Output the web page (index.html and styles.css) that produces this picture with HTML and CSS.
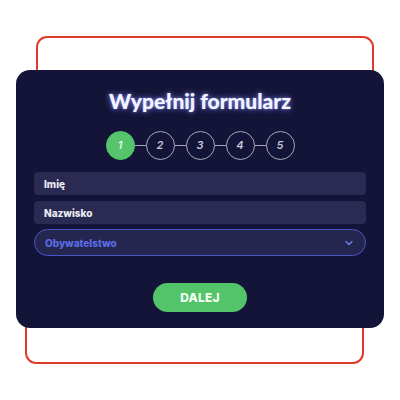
FILE: index.html
```html
<!DOCTYPE html>
<html lang="pl">
<head>
<meta charset="utf-8">
<link rel="stylesheet" href="styles.css">
</head>
<body>
<div class="stage">
  <div class="frame frame-top"></div>
  <div class="frame frame-bottom"></div>
  <div class="card">
    <h1 class="title">Wypełnij formularz</h1>
    <div class="steps">
      <span class="step active">1</span><span class="link"></span>
      <span class="step">2</span><span class="link"></span>
      <span class="step">3</span><span class="link"></span>
      <span class="step">4</span><span class="link"></span>
      <span class="step">5</span>
    </div>
    <div class="fields">
      <div class="field">Imię</div>
      <div class="field">Nazwisko</div>
      <div class="field select">
        <span>Obywatelstwo</span>
        <svg class="chev" width="8" height="6" viewBox="0 0 8 6"><polyline points="1,1.5 4,4.5 7,1.5" fill="none" stroke="#6a78e6" stroke-width="1.6" stroke-linecap="round" stroke-linejoin="round"/></svg>
      </div>
    </div>
    <div class="actions"><button class="btn">DALEJ</button></div>
  </div>
</div>
</body>
</html>
```

FILE: styles.css
```css
html, body { margin: 0; padding: 0; background: #ffffff; }
.stage {
  position: relative;
  width: 400px;
  height: 400px;
  overflow: hidden;
  padding-top: 70px;
  box-sizing: border-box;
  font-family: "Inter", "Lato", sans-serif;
}
.frame {
  position: absolute;
  border: 2.5px solid #e03a2c;
  border-radius: 11px;
  box-sizing: border-box;
}
.frame-top { left: 36px; top: 36px; width: 338px; height: 120px; }
.frame-bottom { left: 25px; top: 250px; width: 339px; height: 114px; }
.card {
  position: relative;
  margin-left: 16px;
  width: 368px;
  height: 258px;
  box-sizing: border-box;
  background: #141438;
  border-radius: 14px;
  padding: 19px 18px 16px 18px;
  display: flex;
  flex-direction: column;
}
.title {
  margin: 0;
  text-align: center;
  font-family: "Lato", sans-serif;
  font-size: 21px;
  line-height: 24px;
  font-weight: 900;
  color: #f4f4ff;
  text-shadow: 0 0 6px rgba(130, 140, 255, 0.9), 0 0 2px rgba(160, 170, 255, 0.8);
}
.steps {
  margin-top: 17px;
  height: 30px;
  display: flex;
  justify-content: center;
  align-items: center;
}
.step {
  width: 29px;
  height: 29px;
  box-sizing: border-box;
  border: 1px solid #a6a6bc;
  border-radius: 50%;
  display: flex;
  align-items: center;
  justify-content: center;
  font-size: 11px;
  font-style: italic;
  font-weight: 600;
  color: #c4c4d4;
}
.step.active {
  background: #55c46b;
  border-color: #55c46b;
  color: #e6f6e8;
}
.link {
  width: 11px;
  height: 1px;
  background: #a6a6bc;
}
.fields {
  margin-top: 12px;
  display: flex;
  flex-direction: column;
  gap: 6px;
}
.field {
  height: 23px;
  box-sizing: border-box;
  background: #2a2a52;
  border-radius: 4px;
  padding-left: 10px;
  display: flex;
  align-items: center;
  font-size: 10px;
  font-weight: 800;
  color: #ececf4;
}
.field.select {
  height: 27px;
  margin-top: -1px;
  border: 1.5px solid #4a56c8;
  border-radius: 14px;
  background: #24264f;
  color: #5b6ce6;
  justify-content: space-between;
  padding-right: 12px;
}
.chev { display: block; }
.actions {
  margin-top: 27px;
  display: flex;
  justify-content: center;
}
.btn {
  width: 94px;
  height: 29px;
  border: none;
  border-radius: 15px;
  background: #54c46a;
  color: #f2fff4;
  font-family: "Inter", sans-serif;
  font-size: 12px;
  font-weight: 800;
  letter-spacing: 0.2px;
  padding: 0;
}
```
